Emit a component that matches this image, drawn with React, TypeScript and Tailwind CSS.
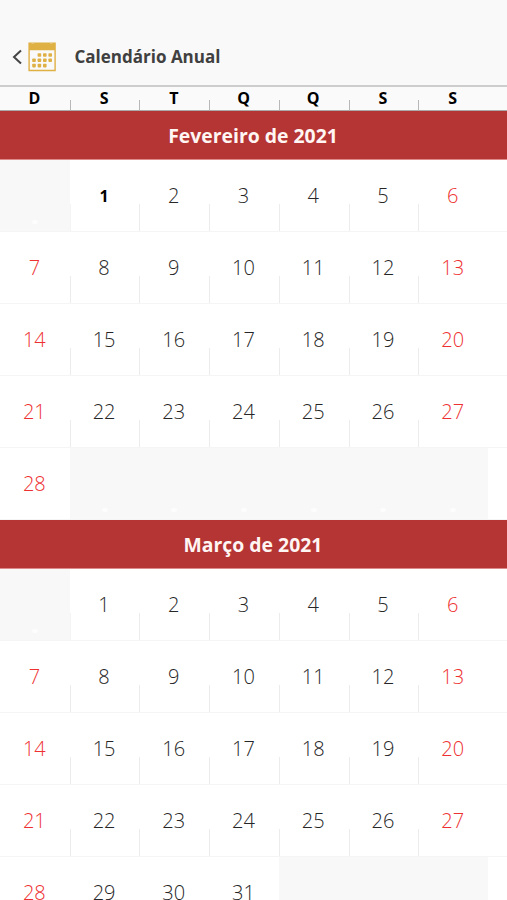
type Month = { title: string; offset: number; days: number; today?: number };

const months: Month[] = [
  { title: 'Fevereiro de 2021', offset: 1, days: 28, today: 1 },
  { title: 'Março de 2021', offset: 1, days: 31 },
];

const weekdays = ['D', 'S', 'T', 'Q', 'Q', 'S', 'S'];

function CalendarIcon() {
  const dots = [
    [11.4, 13], [16.8, 13], [22.2, 13],
    [6, 18.2], [11.4, 18.2], [16.8, 18.2], [22.2, 18.2],
    [6, 23.6], [11.4, 23.6], [16.8, 23.6],
  ];
  return (
    <svg width="28" height="30" viewBox="0 0 28 30" fill="#dfb044">
      <path d="M0.4 0.4H27.8V29.2H0.4ZM1.8 8.2V27.8H26.4V8.2Z" fillRule="evenodd" />
      <path d="M3.4 0h2.6v1.6H3.4zM22 0h2.6v1.6H22z" fill="#ecd6a0" />
      {dots.map(([x, y]) => (
        <rect key={`${x}-${y}`} x={x - 1.8} y={y - 1.8} width="3.6" height="3.6" rx="0.8" />
      ))}
    </svg>
  );
}

function DayCell({ day, column, today }: { day: number | null; column: number; today: boolean }) {
  const color = today
    ? 'text-[16px] font-bold text-black'
    : column === 0 || column === 6
      ? 'text-[20px] font-light text-[#ee3030]'
      : 'text-[20px] font-light text-[#262626]';
  return (
    <div className={`relative flex h-[71px] items-center justify-center pr-px ${day === null ? 'bg-[#f8f8f8]' : ''}`}>
      {day !== null && <span className={`leading-none ${color}`}>{day}</span>}
      {day === null && <span className="absolute bottom-[7px] left-1/2 h-1 w-1.5 -translate-x-1/2 rounded-full bg-[#fdfdfd]" />}
      {column < 6 && (
        <span className={`absolute right-[-1px] bottom-0 h-[27px] w-px ${day === null ? 'bg-[#f4f4f4]' : 'bg-[#ececec]'}`} />
      )}
    </div>
  );
}

function MonthSection({ month }: { month: Month }) {
  const weekCount = Math.ceil((month.offset + month.days) / 7);
  return (
    <section>
      <h2 className="flex h-[49px] items-center justify-center border-b border-[#dc8a8a] bg-[#b53434] pt-[2px] pr-px text-[19.4px] font-bold text-[#fff5f3]">
        <span className="leading-none">{month.title}</span>
      </h2>
      {Array.from({ length: weekCount }, (_, week) => (
        <div key={week} className="h-[72px] border-b border-[#f5f5f5]">
          <div className="grid w-[488px] grid-cols-7">
            {weekdays.map((_, column) => {
              const n = week * 7 + column - month.offset + 1;
              const day = n > 0 && n <= month.days ? n : null;
              return <DayCell key={column} day={day} column={column} today={day !== null && day === month.today} />;
            })}
          </div>
        </div>
      ))}
    </section>
  );
}

export default function App() {
  return (
    <main className="h-[900px] w-[507px] overflow-hidden bg-white font-['Open_Sans',sans-serif]">
      <header className="flex h-[87px] items-start border-b-2 border-[#cdcdcd] bg-[#f9f9f9] pt-[42px] pl-[12px]">
        <svg className="mt-[7px] mr-1.5" width="10" height="16" viewBox="0 0 10 16" fill="none" stroke="#464646" strokeWidth="2">
          <path d="M9 1.5 2 8l7 6.5" />
        </svg>
        <CalendarIcon />
        <h1 className="mt-[6px] ml-[18.5px] text-[17px] leading-[18px] font-bold text-[#404040]">Calendário Anual</h1>
      </header>
      <div className="h-6 border-b border-[#aaa] bg-[#fafafa]">
        <div className="grid w-[488px] grid-cols-7">
          {weekdays.map((name, i) => (
            <div key={i} className="relative flex h-[23px] items-center justify-center pr-px pb-[2px] text-[16px] font-bold text-black">
              <span className="leading-none">{name}</span>
              {i < 6 && <span className="absolute right-[-1px] bottom-0 h-[10px] w-px bg-[#b8b8b8]" />}
            </div>
          ))}
        </div>
      </div>
      {months.map((month) => (
        <MonthSection key={month.title} month={month} />
      ))}
    </main>
  );
}
